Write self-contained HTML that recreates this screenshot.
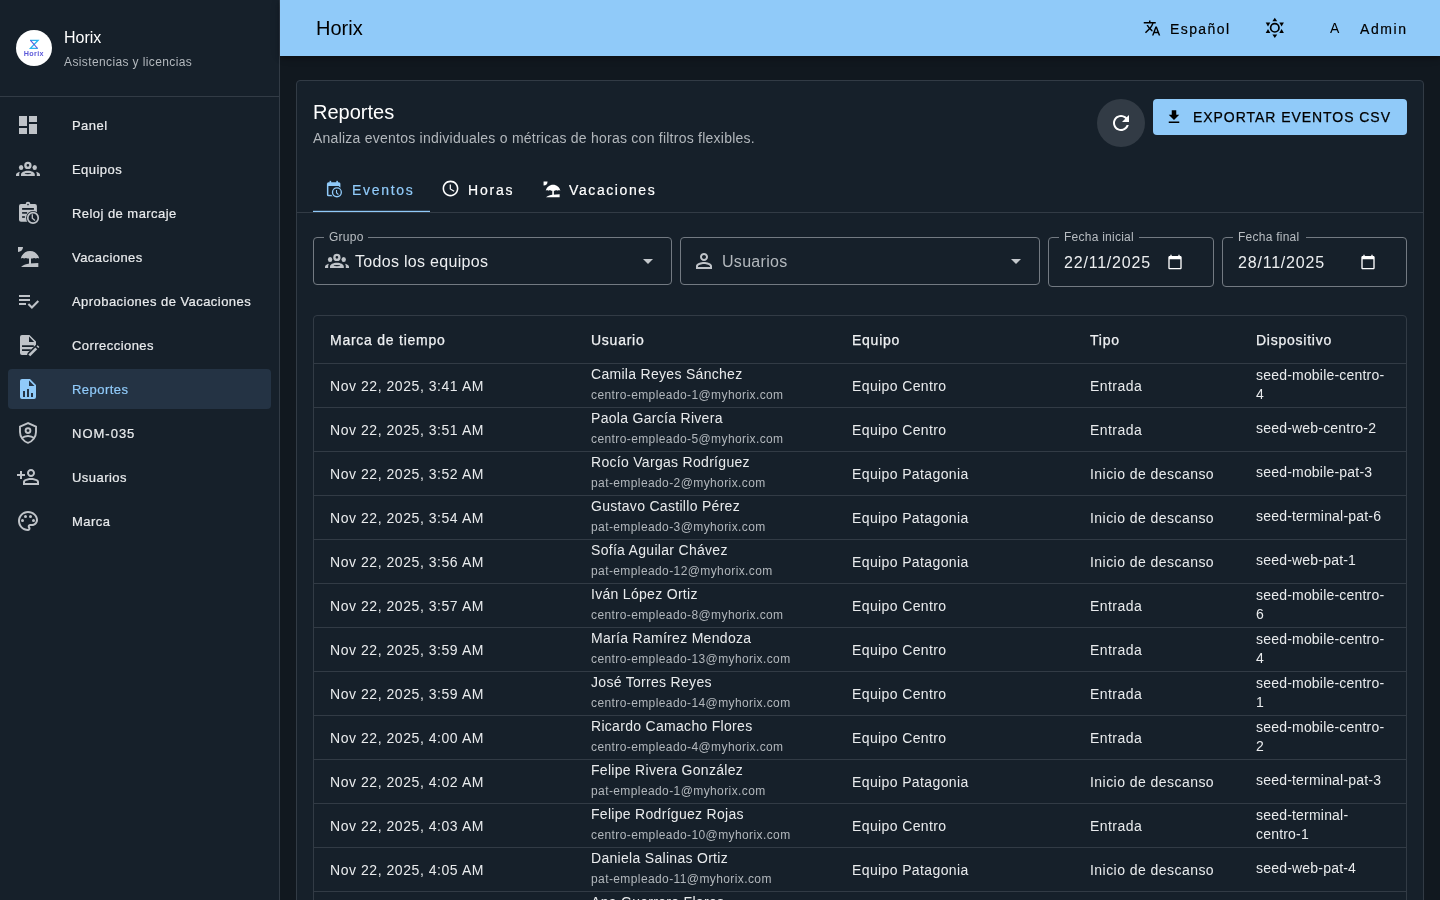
<!DOCTYPE html>
<html><head><meta charset="utf-8">
<style>
*{box-sizing:border-box;margin:0;padding:0}
html,body{width:1440px;height:900px;overflow:hidden}
body{background:#11181f;font-family:"Liberation Sans",sans-serif;color:#fff;position:relative}
.abs{position:absolute;display:block}
.tx{position:absolute;white-space:nowrap}
</style></head><body><div style="position:absolute;left:0;top:0;width:1440px;height:900px;overflow:hidden;will-change:transform">

<div class="abs" style="left:0;top:0;width:280px;height:900px;background:#16202a;border-right:1px solid #323b45"></div>
<div class="abs" style="left:16px;top:30px;width:36px;height:36px;border-radius:50%;background:#fff"></div>
<svg class="abs" style="left:16px;top:30px;width:36px;height:36px" viewBox="0 0 36 36">
<path d="M14 10.3h8.1L14.4 18.4h7.3" stroke="#2bb3ee" stroke-width="1.25" fill="none" stroke-linejoin="miter"/>
<path d="M14.5 10.4 21.6 18.5" stroke="#5a55d8" stroke-width="1.1" fill="none"/>
<text x="17.8" y="25.8" text-anchor="middle" font-family="Liberation Sans" font-weight="700" font-size="7.2" letter-spacing=".3" fill="#5b58d9">Horix</text>
</svg>
<div class="tx" style="left:64px;top:26px;font-size:16px;line-height:24px;color:#fff">Horix</div>
<div class="tx" style="left:64px;top:53px;font-size:12px;line-height:18px;color:#b3b8bd;letter-spacing:.38px">Asistencias y licencias</div>
<div class="abs" style="left:0;top:96px;width:279px;height:1px;background:#323b45"></div>
<svg class="abs" style="left:16px;top:113px;width:24px;height:24px" viewBox="0 0 24 24" fill="#bfc3c8" stroke="#bfc3c8" stroke-width="0" ><path d="M3 13h8V3H3zm0 8h8v-6H3zm10 0h8V11h-8zm0-18v6h8V3z"/></svg>
<div class="tx" style="left:72px;top:116px;font-size:13px;line-height:20px;color:#e9ebed;letter-spacing:0.45px;-webkit-text-stroke:.2px #e9ebed">Panel</div>
<svg class="abs" style="left:16px;top:157px;width:24px;height:24px" viewBox="0 0 24 24" fill="#bfc3c8" stroke="#bfc3c8" stroke-width="0" ><path fill-rule="evenodd" d="M11.9 4.7a3.7 3.7 0 1 1 0 7.4a3.7 3.7 0 0 1 0-7.4zm0 2.3a1.35 1.35 0 1 0 0 2.7a1.35 1.35 0 0 0 0-2.7zM5 19v-1.5c0-2 3.1-3.7 6.9-3.7s6.9 1.7 6.9 3.7V19zm6.9-3.05a3.4 .6 0 1 0 0 1.2a3.4 .6 0 0 0 0-1.2z"/><ellipse cx="5.1" cy="10.4" rx="2.2" ry="2.5"/><ellipse cx="18.7" cy="10.4" rx="2.2" ry="2.5"/><path d="M0 19v-1.3c0-1.3 1.6-2.5 4-3-.5.6-.8 1.3-.8 2.1V19zM24 19v-1.3c0-1.3-1.6-2.5-4-3 .5.6.8 1.3.8 2.1V19z"/></svg>
<div class="tx" style="left:72px;top:160px;font-size:13px;line-height:20px;color:#e9ebed;letter-spacing:0.45px;-webkit-text-stroke:.2px #e9ebed">Equipos</div>
<svg class="abs" style="left:16px;top:201px;width:24px;height:24px" viewBox="0 0 24 24" fill="#bfc3c8" stroke="#bfc3c8" stroke-width="0" ><rect x="3" y="2.9" width="17.9" height="17.8" rx="2"/><circle cx="12" cy="3" r="2.3"/><circle cx="12" cy="3.5" r=".85" fill="#16202a"/><rect x="6.1" y="7" width="11.8" height="1.8" fill="#16202a"/><rect x="6.1" y="11.1" width="5" height="1.6" fill="#16202a"/><rect x="6.1" y="15.2" width="2.8" height="1.6" fill="#16202a"/><circle cx="17" cy="16.9" r="6.9" fill="#16202a"/><circle cx="17" cy="16.9" r="5.25" fill="none" stroke-width="1.7"/><path d="M16.3 13.2v4l2.7 2.3" fill="none" stroke-width="1.3"/></svg>
<div class="tx" style="left:72px;top:204px;font-size:13px;line-height:20px;color:#e9ebed;letter-spacing:0.45px;-webkit-text-stroke:.2px #e9ebed">Reloj de marcaje</div>
<svg class="abs" style="left:16px;top:245px;width:24px;height:24px" viewBox="0 0 24 24" fill="#bfc3c8" stroke="#bfc3c8" stroke-width="0" ><path d="M2 2h5a5 5 0 0 1-5 5z"/><path d="M14 6.1c4.5 0 8.3 3.1 9.2 7.5-.9-.8-2.5-.8-3.4 0-.9-.8-2.5-.8-3.4 0H15V19h-2V13.6h-1.4c-.9-.8-2.5-.8-3.4 0-.9-.8-2.5-.8-3.4 0 .9-4.4 4.7-7.5 9.2-7.5z"/><path d="M5 21.9c2.6-1.9 5.4-3 8.3-3.3L22.3 18.1V21.9z"/></svg>
<div class="tx" style="left:72px;top:248px;font-size:13px;line-height:20px;color:#e9ebed;letter-spacing:0.45px;-webkit-text-stroke:.2px #e9ebed">Vacaciones</div>
<svg class="abs" style="left:16px;top:289px;width:24px;height:24px" viewBox="0 0 24 24" fill="#bfc3c8" stroke="#bfc3c8" stroke-width="0" ><path d="M3 10h11v2H3zm0-4h11v2H3zm0 8h7v2H3z"/><path d="M12.4 15 15.9 18.5 22.3 12.1" fill="none" stroke-width="2.1"/></svg>
<div class="tx" style="left:72px;top:292px;font-size:13px;line-height:20px;color:#e9ebed;letter-spacing:0.45px;-webkit-text-stroke:.2px #e9ebed">Aprobaciones de Vacaciones</div>
<svg class="abs" style="left:16px;top:333px;width:24px;height:24px" viewBox="0 0 24 24" fill="#bfc3c8" stroke="#bfc3c8" stroke-width="0" ><path fill-rule="evenodd" d="M6 2h7.5L20 8.5v3.2l-8.4 8.4-.5 1.9H6a2 2 0 0 1-2-2V4a2 2 0 0 1 2-2zm7 1.6V9h5.2zM6 12.2v1.7h11.6l.2-.2V12.2zm0 4.1V18h7.4l1.7-1.7z"/><path d="M13.3 22.3 20.3 15.3" fill="none" stroke-width="2.6"/><path d="M21.4 14.2 22.5 13.1" fill="none" stroke-width="2.6"/></svg>
<div class="tx" style="left:72px;top:336px;font-size:13px;line-height:20px;color:#e9ebed;letter-spacing:0.45px;-webkit-text-stroke:.2px #e9ebed">Correcciones</div>
<div class="abs" style="left:8px;top:369px;width:263px;height:40px;border-radius:4px;background:#243344"></div>
<svg class="abs" style="left:16px;top:377px;width:24px;height:24px" viewBox="0 0 24 24" fill="#90caf9" stroke="#90caf9" stroke-width="0" ><path fill-rule="evenodd" d="M6 2h8l6 6v12a2 2 0 0 1-2 2H6a2 2 0 0 1-2-2V4a2 2 0 0 1 2-2zm7 1.5V9h5.5zM7 14v6h2v-6zm4-2v8h2v-8zm4 4v4h2v-4z"/></svg>
<div class="tx" style="left:72px;top:380px;font-size:13px;line-height:20px;color:#90caf9;letter-spacing:0.45px;-webkit-text-stroke:.2px #90caf9">Reportes</div>
<svg class="abs" style="left:16px;top:421px;width:24px;height:24px" viewBox="0 0 24 24" fill="#bfc3c8" stroke="#bfc3c8" stroke-width="0" ><path fill="none" stroke-width="1.9" d="M12 2.1 4 5.6v5.3c0 5 3.4 9.6 8 10.9 4.6-1.3 8-5.9 8-10.9V5.6z"/><circle cx="12" cy="9.6" r="2.4" fill="none" stroke-width="1.9"/><path fill="none" stroke-width="1.9" d="M5.6 17.3c1.8-1.5 4-2.3 6.4-2.3s4.6.8 6.4 2.3"/></svg>
<div class="tx" style="left:72px;top:424px;font-size:13px;line-height:20px;color:#e9ebed;letter-spacing:1.0px;-webkit-text-stroke:.2px #e9ebed">NOM-035</div>
<svg class="abs" style="left:16px;top:465px;width:24px;height:24px" viewBox="0 0 24 24" fill="#bfc3c8" stroke="#bfc3c8" stroke-width="0" ><g transform="translate(24 0) scale(-1 1)"><path d="M20 9V6h-2v3h-3v2h3v3h2v-3h3V9zM9 12c2.21 0 4-1.79 4-4s-1.79-4-4-4-4 1.79-4 4 1.79 4 4 4m0-6c1.1 0 2 .9 2 2s-.9 2-2 2-2-.9-2-2 .9-2 2-2m6.39 8.56C13.71 13.7 11.53 13 9 13s-4.71.7-6.39 1.56C1.61 15.07 1 16.1 1 17.22V20h16v-2.78c0-1.12-.61-2.15-1.61-2.66M15 18H3v-.78c0-.38.2-.72.52-.88C4.71 15.73 6.23 15 9 15s4.29.73 5.48 1.34c.32.16.52.5.52.88z"/></g></svg>
<div class="tx" style="left:72px;top:468px;font-size:13px;line-height:20px;color:#e9ebed;letter-spacing:0.45px;-webkit-text-stroke:.2px #e9ebed">Usuarios</div>
<svg class="abs" style="left:16px;top:509px;width:24px;height:24px" viewBox="0 0 24 24" fill="#bfc3c8" stroke="#bfc3c8" stroke-width="0" ><path d="M12 22C6.49 22 2 17.51 2 12S6.49 2 12 2s10 4.04 10 9c0 3.31-2.69 6-6 6h-1.77c-.28 0-.5.22-.5.5 0 .12.05.23.13.33.41.47.64 1.06.64 1.67 0 1.38-1.12 2.5-2.5 2.5m0-18c-4.41 0-8 3.59-8 8s3.59 8 8 8c.28 0 .5-.22.5-.5 0-.16-.08-.28-.14-.35-.41-.46-.63-1.05-.63-1.65 0-1.38 1.12-2.5 2.5-2.5H16c2.21 0 4-1.79 4-4 0-3.86-3.59-7-8-7"/><circle cx="6.5" cy="11.5" r="1.5"/><circle cx="9.5" cy="7.5" r="1.5"/><circle cx="14.5" cy="7.5" r="1.5"/><circle cx="17.5" cy="11.5" r="1.5"/></svg>
<div class="tx" style="left:72px;top:512px;font-size:13px;line-height:20px;color:#e9ebed;letter-spacing:0.45px;-webkit-text-stroke:.2px #e9ebed">Marca</div>
<div class="abs" style="left:280px;top:0;width:1160px;height:56px;background:#90caf9;box-shadow:0 2px 4px -1px rgba(0,0,0,.2),0 4px 5px 0 rgba(0,0,0,.14),0 1px 10px 0 rgba(0,0,0,.12)"></div>
<div class="tx" style="left:316px;top:12px;font-size:20px;line-height:32px;color:#000">Horix</div>
<svg class="abs" style="left:1143px;top:19px;width:18px;height:18px" viewBox="0 0 24 24" fill="#000" stroke="#000" stroke-width="0" ><path d="M12.87 15.07l-2.54-2.51.03-.03c1.74-1.94 2.98-4.17 3.71-6.53H17V4h-7V2H8v2H1v1.99h11.17C11.5 7.92 10.44 9.75 9 11.35 8.07 10.32 7.3 9.19 6.69 8h-2c.73 1.63 1.73 3.17 2.98 4.56l-5.09 5.02L4 19l5-5 3.11 3.11zM18.5 10h-2L12 22h2l1.12-3h4.75L21 22h2zm-2.62 7 1.62-4.33L19.12 17z"/></svg>
<div class="tx" style="left:1170px;top:19px;font-size:14px;line-height:20px;color:#000;letter-spacing:1.4px;-webkit-text-stroke:.2px #000">Español</div>
<svg class="abs" style="left:1263px;top:16px;width:24px;height:24px" viewBox="0 0 24 24" fill="#000">
<circle cx="11.8" cy="11.8" r="4.2" fill="none" stroke="#000" stroke-width="1.7"/>
<path d="M11.8 1.7 14.2 5.2H9.4z"/><path d="M11.8 21.9 14.2 18.4H9.4z"/>
<path d="M2.7 6.5 7.3 6.5 5 10.5z"/><path d="M20.9 6.5 16.3 6.5 18.6 10.5z"/>
<path d="M2.7 17.1 7.3 17.1 5 13.1z"/><path d="M20.9 17.1 16.3 17.1 18.6 13.1z"/>
</svg>
<div class="tx" style="left:1330px;top:18px;font-size:14px;line-height:20px;color:#000">A</div>
<div class="tx" style="left:1360px;top:19px;font-size:14px;line-height:20px;color:#000;letter-spacing:1.6px;-webkit-text-stroke:.2px #000">Admin</div>
<div class="abs" style="left:296px;top:80px;width:1128px;height:880px;background:#16202a;border:1px solid #323b45;border-radius:4px"></div>
<div class="tx" style="left:313px;top:96px;font-size:20px;line-height:32px;color:#fff">Reportes</div>
<div class="tx" style="left:313px;top:128px;font-size:14px;line-height:20px;color:#b2b7bc;letter-spacing:.24px">Analiza eventos individuales o métricas de horas con filtros flexibles.</div>
<div class="abs" style="left:1097px;top:99px;width:48px;height:48px;border-radius:50%;background:#323b45"></div>
<svg class="abs" style="left:1109px;top:111px;width:24px;height:24px" viewBox="0 0 24 24" fill="#fff" stroke="#fff" stroke-width="0" ><path d="M17.65 6.35C16.2 4.9 14.21 4 12 4c-4.42 0-7.99 3.58-7.99 8s3.57 8 7.99 8c3.73 0 6.84-2.55 7.73-6h-2.08c-.82 2.33-3.04 4-5.65 4-3.31 0-6-2.69-6-6s2.69-6 6-6c1.66 0 3.14.69 4.22 1.78L13 11h7V4z"/></svg>
<div class="abs" style="left:1153px;top:99px;width:254px;height:36px;border-radius:4px;background:#90caf9"></div>
<svg class="abs" style="left:1165px;top:108px;width:18px;height:18px" viewBox="0 0 24 24" fill="#000" stroke="#000" stroke-width="0" ><path d="M19 9h-4V3H9v6H5l7 7zM5 18v2h14v-2z"/></svg>
<div class="tx" style="left:1193px;top:107px;font-size:14px;line-height:20px;color:#000;letter-spacing:.95px;-webkit-text-stroke:.25px #000">EXPORTAR EVENTOS CSV</div>
<div class="abs" style="left:297px;top:212px;width:1126px;height:1px;background:#323b45"></div>
<div class="abs" style="left:313px;top:211px;width:117px;height:1px;background:#90caf9"></div>
<div class="abs" style="left:313px;top:210px;width:117px;height:1px;background:#90caf9;opacity:.2"></div>
<svg class="abs" style="left:325px;top:180px;width:20px;height:20px" viewBox="0 0 24 24" fill="#90caf9" stroke="#90caf9" stroke-width="0" ><rect x="2.3" y="2.6" width="16.2" height="17" rx="2"/><rect x="4.1" y="7.2" width="12.6" height="10.6" fill="#16202a" stroke="none"/><rect x="5.5" y="1" width="1.9" height="3"/><rect x="13.6" y="1" width="1.9" height="3"/><circle cx="14.3" cy="14.8" r="7.2" fill="#16202a" stroke="none"/><circle cx="14.3" cy="14.8" r="5.3" fill="none" stroke-width="1.6"/><path d="M13.8 12v3.2l2.3 2.3" fill="none" stroke-width="1.3"/></svg>
<div class="tx" style="left:352px;top:180px;font-size:14px;line-height:20px;color:#90caf9;letter-spacing:1.7px;-webkit-text-stroke:.2px #90caf9">Eventos</div>
<svg class="abs" style="left:441px;top:179px;width:19px;height:19px" viewBox="0 0 24 24" fill="#fff" stroke="#fff" stroke-width="0" ><path d="M11.99 2C6.47 2 2 6.48 2 12s4.47 10 9.99 10C17.52 22 22 17.52 22 12S17.52 2 11.99 2M12 20c-4.42 0-8-3.58-8-8s3.58-8 8-8 8 3.58 8 8-3.58 8-8 8"/><path d="M12.5 7H11v6l5.25 3.15.75-1.23-4.5-2.67z"/></svg>
<div class="tx" style="left:468px;top:180px;font-size:14px;line-height:20px;color:#fff;letter-spacing:1.8px;-webkit-text-stroke:.2px #fff">Horas</div>
<svg class="abs" style="left:542px;top:180px;width:19px;height:19px" viewBox="0 0 24 24" fill="#fff" stroke="#fff" stroke-width="0" ><path d="M2 2h5a5 5 0 0 1-5 5z"/><path d="M14 6.1c4.5 0 8.3 3.1 9.2 7.5-.9-.8-2.5-.8-3.4 0-.9-.8-2.5-.8-3.4 0H15V19h-2V13.6h-1.4c-.9-.8-2.5-.8-3.4 0-.9-.8-2.5-.8-3.4 0 .9-4.4 4.7-7.5 9.2-7.5z"/><path d="M5 21.9c2.6-1.9 5.4-3 8.3-3.3L22.3 18.1V21.9z"/></svg>
<div class="tx" style="left:569px;top:180px;font-size:14px;line-height:20px;color:#fff;letter-spacing:1.6px;-webkit-text-stroke:.2px #fff">Vacaciones</div>
<div class="abs" style="left:313px;top:237px;width:359px;height:48px;border:1px solid #737a82;border-radius:4px"></div><div class="abs" style="left:324px;top:235px;width:44px;height:4px;background:#16202a"></div><div class="tx" style="left:329px;top:229px;font-size:12px;line-height:16px;color:#b8bdc2;letter-spacing:.25px">Grupo</div>
<svg class="abs" style="left:325px;top:249px;width:24px;height:24px" viewBox="0 0 24 24" fill="#bfc3c8" stroke="#bfc3c8" stroke-width="0" ><path fill-rule="evenodd" d="M11.9 4.7a3.7 3.7 0 1 1 0 7.4a3.7 3.7 0 0 1 0-7.4zm0 2.3a1.35 1.35 0 1 0 0 2.7a1.35 1.35 0 0 0 0-2.7zM5 19v-1.5c0-2 3.1-3.7 6.9-3.7s6.9 1.7 6.9 3.7V19zm6.9-3.05a3.4 .6 0 1 0 0 1.2a3.4 .6 0 0 0 0-1.2z"/><ellipse cx="5.1" cy="10.4" rx="2.2" ry="2.5"/><ellipse cx="18.7" cy="10.4" rx="2.2" ry="2.5"/><path d="M0 19v-1.3c0-1.3 1.6-2.5 4-3-.5.6-.8 1.3-.8 2.1V19zM24 19v-1.3c0-1.3-1.6-2.5-4-3 .5.6.8 1.3.8 2.1V19z"/></svg>
<div class="tx" style="left:355px;top:250px;font-size:16px;line-height:23px;color:#eceef0;letter-spacing:.3px">Todos los equipos</div>
<svg class="abs" style="left:636px;top:249px;width:24px;height:24px" viewBox="0 0 24 24" fill="#c4c8cc" stroke="#c4c8cc" stroke-width="0" ><path d="M7 10l5 5 5-5z"/></svg>
<div class="abs" style="left:680px;top:237px;width:360px;height:48px;border:1px solid #737a82;border-radius:4px"></div>
<svg class="abs" style="left:692px;top:249px;width:24px;height:24px" viewBox="0 0 24 24" fill="#bfc3c8" stroke="#bfc3c8" stroke-width="0" ><path d="M12 6c1.1 0 2 .9 2 2s-.9 2-2 2-2-.9-2-2 .9-2 2-2m0 9c2.7 0 5.8 1.29 6 2v1H6v-.99c.2-.72 3.3-2.01 6-2.01m0-11C9.79 4 8 5.79 8 8s1.79 4 4 4 4-1.79 4-4-1.79-4-4-4m0 9c-2.67 0-8 1.34-8 4v3h16v-3c0-2.66-5.33-4-8-4"/></svg>
<div class="tx" style="left:722px;top:250px;font-size:16px;line-height:23px;color:#b3b8bd;letter-spacing:.3px">Usuarios</div>
<svg class="abs" style="left:1004px;top:249px;width:24px;height:24px" viewBox="0 0 24 24" fill="#c4c8cc" stroke="#c4c8cc" stroke-width="0" ><path d="M7 10l5 5 5-5z"/></svg>
<div class="abs" style="left:1048px;top:237px;width:166px;height:50px;border:1px solid #737a82;border-radius:4px"></div><div class="abs" style="left:1059px;top:235px;width:80px;height:4px;background:#16202a"></div><div class="tx" style="left:1064px;top:229px;font-size:12px;line-height:16px;color:#b8bdc2;letter-spacing:.25px">Fecha inicial</div>
<div class="tx" style="left:1064px;top:251px;font-size:16px;line-height:23px;color:#eceef0;letter-spacing:.8px">22/11/2025</div>
<svg class="abs" style="left:1167px;top:254px;width:16px;height:16px" viewBox="0 0 24 24" fill="#fff" stroke="#fff" stroke-width="0" ><path d="M20 3h-1V1h-2v2H7V1H5v2H4c-1.1 0-2 .9-2 2v16c0 1.1.9 2 2 2h16c1.1 0 2-.9 2-2V5c0-1.1-.9-2-2-2m0 18H4V8h16z"/></svg>
<div class="abs" style="left:1222px;top:237px;width:185px;height:50px;border:1px solid #737a82;border-radius:4px"></div><div class="abs" style="left:1233px;top:235px;width:73px;height:4px;background:#16202a"></div><div class="tx" style="left:1238px;top:229px;font-size:12px;line-height:16px;color:#b8bdc2;letter-spacing:.25px">Fecha final</div>
<div class="tx" style="left:1238px;top:251px;font-size:16px;line-height:23px;color:#eceef0;letter-spacing:.8px">28/11/2025</div>
<svg class="abs" style="left:1360px;top:254px;width:16px;height:16px" viewBox="0 0 24 24" fill="#fff" stroke="#fff" stroke-width="0" ><path d="M20 3h-1V1h-2v2H7V1H5v2H4c-1.1 0-2 .9-2 2v16c0 1.1.9 2 2 2h16c1.1 0 2-.9 2-2V5c0-1.1-.9-2-2-2m0 18H4V8h16z"/></svg>
<div class="abs" style="left:313px;top:315px;width:1094px;height:700px;border:1px solid #323b45;border-radius:4px"></div>
<div class="tx" style="left:330px;top:330px;font-size:14px;line-height:20px;color:#eef0f2;letter-spacing:.75px;-webkit-text-stroke:.25px #eef0f2">Marca de tiempo</div>
<div class="tx" style="left:591px;top:330px;font-size:14px;line-height:20px;color:#eef0f2;letter-spacing:.75px;-webkit-text-stroke:.25px #eef0f2">Usuario</div>
<div class="tx" style="left:852px;top:330px;font-size:14px;line-height:20px;color:#eef0f2;letter-spacing:.75px;-webkit-text-stroke:.25px #eef0f2">Equipo</div>
<div class="tx" style="left:1090px;top:330px;font-size:14px;line-height:20px;color:#eef0f2;letter-spacing:.75px;-webkit-text-stroke:.25px #eef0f2">Tipo</div>
<div class="tx" style="left:1256px;top:330px;font-size:14px;line-height:20px;color:#eef0f2;letter-spacing:.75px;-webkit-text-stroke:.25px #eef0f2">Dispositivo</div>
<div class="abs" style="left:314px;top:363px;width:1092px;height:1px;background:#323b45"></div>
<div class="abs" style="left:314px;top:407px;width:1092px;height:1px;background:#323b45"></div>
<div class="tx" style="left:330px;top:376px;font-size:14px;line-height:20px;color:#e9ebed;letter-spacing:.55px">Nov 22, 2025, 3:41 AM</div>
<div class="tx" style="left:591px;top:364px;font-size:14px;line-height:20px;color:#e9ebed;letter-spacing:.3px">Camila Reyes Sánchez</div>
<div class="tx" style="left:591px;top:385px;font-size:12px;line-height:20px;color:#b2b7bc;letter-spacing:.4px">centro-empleado-1@myhorix.com</div>
<div class="tx" style="left:852px;top:376px;font-size:14px;line-height:20px;color:#e9ebed;letter-spacing:.38px">Equipo Centro</div>
<div class="tx" style="left:1090px;top:376px;font-size:14px;line-height:20px;color:#e9ebed;letter-spacing:.45px">Entrada</div>
<div class="tx" style="left:1256px;top:366px;font-size:14px;line-height:19px;color:#e9ebed;letter-spacing:.2px">seed-mobile-centro-<br>4</div>
<div class="abs" style="left:314px;top:451px;width:1092px;height:1px;background:#323b45"></div>
<div class="tx" style="left:330px;top:420px;font-size:14px;line-height:20px;color:#e9ebed;letter-spacing:.55px">Nov 22, 2025, 3:51 AM</div>
<div class="tx" style="left:591px;top:408px;font-size:14px;line-height:20px;color:#e9ebed;letter-spacing:.3px">Paola García Rivera</div>
<div class="tx" style="left:591px;top:429px;font-size:12px;line-height:20px;color:#b2b7bc;letter-spacing:.4px">centro-empleado-5@myhorix.com</div>
<div class="tx" style="left:852px;top:420px;font-size:14px;line-height:20px;color:#e9ebed;letter-spacing:.38px">Equipo Centro</div>
<div class="tx" style="left:1090px;top:420px;font-size:14px;line-height:20px;color:#e9ebed;letter-spacing:.45px">Entrada</div>
<div class="tx" style="left:1256px;top:419px;font-size:14px;line-height:19px;color:#e9ebed;letter-spacing:.2px">seed-web-centro-2</div>
<div class="abs" style="left:314px;top:495px;width:1092px;height:1px;background:#323b45"></div>
<div class="tx" style="left:330px;top:464px;font-size:14px;line-height:20px;color:#e9ebed;letter-spacing:.55px">Nov 22, 2025, 3:52 AM</div>
<div class="tx" style="left:591px;top:452px;font-size:14px;line-height:20px;color:#e9ebed;letter-spacing:.3px">Rocío Vargas Rodríguez</div>
<div class="tx" style="left:591px;top:473px;font-size:12px;line-height:20px;color:#b2b7bc;letter-spacing:.4px">pat-empleado-2@myhorix.com</div>
<div class="tx" style="left:852px;top:464px;font-size:14px;line-height:20px;color:#e9ebed;letter-spacing:.38px">Equipo Patagonia</div>
<div class="tx" style="left:1090px;top:464px;font-size:14px;line-height:20px;color:#e9ebed;letter-spacing:.45px">Inicio de descanso</div>
<div class="tx" style="left:1256px;top:463px;font-size:14px;line-height:19px;color:#e9ebed;letter-spacing:.2px">seed-mobile-pat-3</div>
<div class="abs" style="left:314px;top:539px;width:1092px;height:1px;background:#323b45"></div>
<div class="tx" style="left:330px;top:508px;font-size:14px;line-height:20px;color:#e9ebed;letter-spacing:.55px">Nov 22, 2025, 3:54 AM</div>
<div class="tx" style="left:591px;top:496px;font-size:14px;line-height:20px;color:#e9ebed;letter-spacing:.3px">Gustavo Castillo Pérez</div>
<div class="tx" style="left:591px;top:517px;font-size:12px;line-height:20px;color:#b2b7bc;letter-spacing:.4px">pat-empleado-3@myhorix.com</div>
<div class="tx" style="left:852px;top:508px;font-size:14px;line-height:20px;color:#e9ebed;letter-spacing:.38px">Equipo Patagonia</div>
<div class="tx" style="left:1090px;top:508px;font-size:14px;line-height:20px;color:#e9ebed;letter-spacing:.45px">Inicio de descanso</div>
<div class="tx" style="left:1256px;top:507px;font-size:14px;line-height:19px;color:#e9ebed;letter-spacing:.2px">seed-terminal-pat-6</div>
<div class="abs" style="left:314px;top:583px;width:1092px;height:1px;background:#323b45"></div>
<div class="tx" style="left:330px;top:552px;font-size:14px;line-height:20px;color:#e9ebed;letter-spacing:.55px">Nov 22, 2025, 3:56 AM</div>
<div class="tx" style="left:591px;top:540px;font-size:14px;line-height:20px;color:#e9ebed;letter-spacing:.3px">Sofía Aguilar Chávez</div>
<div class="tx" style="left:591px;top:561px;font-size:12px;line-height:20px;color:#b2b7bc;letter-spacing:.4px">pat-empleado-12@myhorix.com</div>
<div class="tx" style="left:852px;top:552px;font-size:14px;line-height:20px;color:#e9ebed;letter-spacing:.38px">Equipo Patagonia</div>
<div class="tx" style="left:1090px;top:552px;font-size:14px;line-height:20px;color:#e9ebed;letter-spacing:.45px">Inicio de descanso</div>
<div class="tx" style="left:1256px;top:551px;font-size:14px;line-height:19px;color:#e9ebed;letter-spacing:.2px">seed-web-pat-1</div>
<div class="abs" style="left:314px;top:627px;width:1092px;height:1px;background:#323b45"></div>
<div class="tx" style="left:330px;top:596px;font-size:14px;line-height:20px;color:#e9ebed;letter-spacing:.55px">Nov 22, 2025, 3:57 AM</div>
<div class="tx" style="left:591px;top:584px;font-size:14px;line-height:20px;color:#e9ebed;letter-spacing:.3px">Iván López Ortiz</div>
<div class="tx" style="left:591px;top:605px;font-size:12px;line-height:20px;color:#b2b7bc;letter-spacing:.4px">centro-empleado-8@myhorix.com</div>
<div class="tx" style="left:852px;top:596px;font-size:14px;line-height:20px;color:#e9ebed;letter-spacing:.38px">Equipo Centro</div>
<div class="tx" style="left:1090px;top:596px;font-size:14px;line-height:20px;color:#e9ebed;letter-spacing:.45px">Entrada</div>
<div class="tx" style="left:1256px;top:586px;font-size:14px;line-height:19px;color:#e9ebed;letter-spacing:.2px">seed-mobile-centro-<br>6</div>
<div class="abs" style="left:314px;top:671px;width:1092px;height:1px;background:#323b45"></div>
<div class="tx" style="left:330px;top:640px;font-size:14px;line-height:20px;color:#e9ebed;letter-spacing:.55px">Nov 22, 2025, 3:59 AM</div>
<div class="tx" style="left:591px;top:628px;font-size:14px;line-height:20px;color:#e9ebed;letter-spacing:.3px">María Ramírez Mendoza</div>
<div class="tx" style="left:591px;top:649px;font-size:12px;line-height:20px;color:#b2b7bc;letter-spacing:.4px">centro-empleado-13@myhorix.com</div>
<div class="tx" style="left:852px;top:640px;font-size:14px;line-height:20px;color:#e9ebed;letter-spacing:.38px">Equipo Centro</div>
<div class="tx" style="left:1090px;top:640px;font-size:14px;line-height:20px;color:#e9ebed;letter-spacing:.45px">Entrada</div>
<div class="tx" style="left:1256px;top:630px;font-size:14px;line-height:19px;color:#e9ebed;letter-spacing:.2px">seed-mobile-centro-<br>4</div>
<div class="abs" style="left:314px;top:715px;width:1092px;height:1px;background:#323b45"></div>
<div class="tx" style="left:330px;top:684px;font-size:14px;line-height:20px;color:#e9ebed;letter-spacing:.55px">Nov 22, 2025, 3:59 AM</div>
<div class="tx" style="left:591px;top:672px;font-size:14px;line-height:20px;color:#e9ebed;letter-spacing:.3px">José Torres Reyes</div>
<div class="tx" style="left:591px;top:693px;font-size:12px;line-height:20px;color:#b2b7bc;letter-spacing:.4px">centro-empleado-14@myhorix.com</div>
<div class="tx" style="left:852px;top:684px;font-size:14px;line-height:20px;color:#e9ebed;letter-spacing:.38px">Equipo Centro</div>
<div class="tx" style="left:1090px;top:684px;font-size:14px;line-height:20px;color:#e9ebed;letter-spacing:.45px">Entrada</div>
<div class="tx" style="left:1256px;top:674px;font-size:14px;line-height:19px;color:#e9ebed;letter-spacing:.2px">seed-mobile-centro-<br>1</div>
<div class="abs" style="left:314px;top:759px;width:1092px;height:1px;background:#323b45"></div>
<div class="tx" style="left:330px;top:728px;font-size:14px;line-height:20px;color:#e9ebed;letter-spacing:.55px">Nov 22, 2025, 4:00 AM</div>
<div class="tx" style="left:591px;top:716px;font-size:14px;line-height:20px;color:#e9ebed;letter-spacing:.3px">Ricardo Camacho Flores</div>
<div class="tx" style="left:591px;top:737px;font-size:12px;line-height:20px;color:#b2b7bc;letter-spacing:.4px">centro-empleado-4@myhorix.com</div>
<div class="tx" style="left:852px;top:728px;font-size:14px;line-height:20px;color:#e9ebed;letter-spacing:.38px">Equipo Centro</div>
<div class="tx" style="left:1090px;top:728px;font-size:14px;line-height:20px;color:#e9ebed;letter-spacing:.45px">Entrada</div>
<div class="tx" style="left:1256px;top:718px;font-size:14px;line-height:19px;color:#e9ebed;letter-spacing:.2px">seed-mobile-centro-<br>2</div>
<div class="abs" style="left:314px;top:803px;width:1092px;height:1px;background:#323b45"></div>
<div class="tx" style="left:330px;top:772px;font-size:14px;line-height:20px;color:#e9ebed;letter-spacing:.55px">Nov 22, 2025, 4:02 AM</div>
<div class="tx" style="left:591px;top:760px;font-size:14px;line-height:20px;color:#e9ebed;letter-spacing:.3px">Felipe Rivera González</div>
<div class="tx" style="left:591px;top:781px;font-size:12px;line-height:20px;color:#b2b7bc;letter-spacing:.4px">pat-empleado-1@myhorix.com</div>
<div class="tx" style="left:852px;top:772px;font-size:14px;line-height:20px;color:#e9ebed;letter-spacing:.38px">Equipo Patagonia</div>
<div class="tx" style="left:1090px;top:772px;font-size:14px;line-height:20px;color:#e9ebed;letter-spacing:.45px">Inicio de descanso</div>
<div class="tx" style="left:1256px;top:771px;font-size:14px;line-height:19px;color:#e9ebed;letter-spacing:.2px">seed-terminal-pat-3</div>
<div class="abs" style="left:314px;top:847px;width:1092px;height:1px;background:#323b45"></div>
<div class="tx" style="left:330px;top:816px;font-size:14px;line-height:20px;color:#e9ebed;letter-spacing:.55px">Nov 22, 2025, 4:03 AM</div>
<div class="tx" style="left:591px;top:804px;font-size:14px;line-height:20px;color:#e9ebed;letter-spacing:.3px">Felipe Rodríguez Rojas</div>
<div class="tx" style="left:591px;top:825px;font-size:12px;line-height:20px;color:#b2b7bc;letter-spacing:.4px">centro-empleado-10@myhorix.com</div>
<div class="tx" style="left:852px;top:816px;font-size:14px;line-height:20px;color:#e9ebed;letter-spacing:.38px">Equipo Centro</div>
<div class="tx" style="left:1090px;top:816px;font-size:14px;line-height:20px;color:#e9ebed;letter-spacing:.45px">Entrada</div>
<div class="tx" style="left:1256px;top:806px;font-size:14px;line-height:19px;color:#e9ebed;letter-spacing:.2px">seed-terminal-<br>centro-1</div>
<div class="abs" style="left:314px;top:891px;width:1092px;height:1px;background:#323b45"></div>
<div class="tx" style="left:330px;top:860px;font-size:14px;line-height:20px;color:#e9ebed;letter-spacing:.55px">Nov 22, 2025, 4:05 AM</div>
<div class="tx" style="left:591px;top:848px;font-size:14px;line-height:20px;color:#e9ebed;letter-spacing:.3px">Daniela Salinas Ortiz</div>
<div class="tx" style="left:591px;top:869px;font-size:12px;line-height:20px;color:#b2b7bc;letter-spacing:.4px">pat-empleado-11@myhorix.com</div>
<div class="tx" style="left:852px;top:860px;font-size:14px;line-height:20px;color:#e9ebed;letter-spacing:.38px">Equipo Patagonia</div>
<div class="tx" style="left:1090px;top:860px;font-size:14px;line-height:20px;color:#e9ebed;letter-spacing:.45px">Inicio de descanso</div>
<div class="tx" style="left:1256px;top:859px;font-size:14px;line-height:19px;color:#e9ebed;letter-spacing:.2px">seed-web-pat-4</div>
<div class="abs" style="left:314px;top:935px;width:1092px;height:1px;background:#323b45"></div>
<div class="tx" style="left:330px;top:904px;font-size:14px;line-height:20px;color:#e9ebed;letter-spacing:.55px">Nov 22, 2025, 4:07 AM</div>
<div class="tx" style="left:591px;top:892px;font-size:14px;line-height:20px;color:#e9ebed;letter-spacing:.3px">Ana Guerrero Flores</div>
<div class="tx" style="left:591px;top:913px;font-size:12px;line-height:20px;color:#b2b7bc;letter-spacing:.4px">pat-empleado-4@myhorix.com</div>
<div class="tx" style="left:852px;top:904px;font-size:14px;line-height:20px;color:#e9ebed;letter-spacing:.38px">Equipo Patagonia</div>
<div class="tx" style="left:1090px;top:904px;font-size:14px;line-height:20px;color:#e9ebed;letter-spacing:.45px">Entrada</div>
<div class="tx" style="left:1256px;top:903px;font-size:14px;line-height:19px;color:#e9ebed;letter-spacing:.2px">seed-web-pat-2</div>
</div></body></html>
